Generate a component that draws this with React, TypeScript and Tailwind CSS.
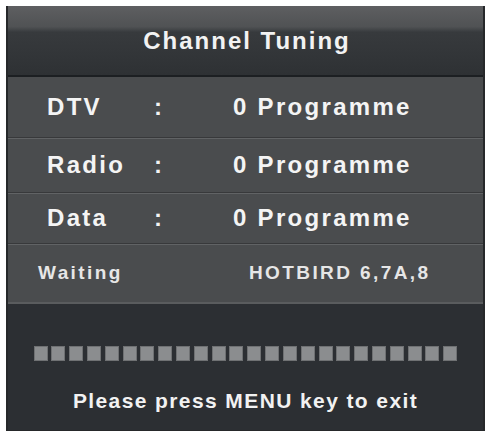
const rows = [
  { label: "DTV", count: 0, height: "h-[60px]" },
  { label: "Radio", count: 0, height: "h-[55px]" },
  { label: "Data", count: 0, height: "h-[51px]" },
];

const BLOCKS = 24;

export default function App() {
  return (
    <div className="w-[490px] h-[432px] bg-white pt-[6px] pl-[6px] font-['Liberation_Sans',Arial,sans-serif]">
      <div className="w-[479px] h-[425px] flex flex-col border-l-2 border-r-2 border-b border-[#26282a] bg-[#2c2f33]">
        {/* Title bar */}
        <div className="h-[71px] flex items-center justify-center border-b-2 border-[#1c1f22] bg-[linear-gradient(180deg,#5e5f61_0%,#505254_30%,#373a3d_38%,#2e3134_100%)]">
          <h1 className="text-[24px] font-bold tracking-[2px] text-[#f2f2f2] pl-[3px] pt-[1px]">Channel Tuning</h1>
        </div>

        {/* Programme counts */}
        <div className="bg-[#4a4c4e]">
          {rows.map((row, i) => (
            <div
              key={row.label}
              className={`${row.height} flex items-center pl-[39px] text-[24px] font-bold tracking-[2.3px] text-[#f4f4f4] ${
                i > 0 ? "border-t border-[#38393b] shadow-[inset_0_1px_0_#616365]" : ""
              }`}
            >
              <span className="w-[107px]">{row.label}</span>
              <span className="w-[79px]">:</span>
              <span>{row.count} Programme</span>
            </div>
          ))}
          <div className="h-[59px] flex items-center pl-[30px] text-[19px] font-bold tracking-[2.4px] text-[#e6e6e6] border-t border-[#38393b] shadow-[inset_0_1px_0_#616365]">
            <span className="w-[211px]">Waiting</span>
            <span>HOTBIRD 6,7A,8</span>
          </div>
        </div>

        {/* Progress + hint */}
        <div className="flex-1 flex flex-col items-center border-t-2 border-[#5a5c5e]">
          <div className="mt-[42px] w-[424px] flex justify-between">
            {Array.from({ length: BLOCKS }).map((_, i) => (
              <div key={i} className="w-[14px] h-[15px] bg-[#8b8d8f] border border-[#6f7173]" />
            ))}
          </div>
          <p className="mt-[24px] text-[21px] font-bold tracking-[1.4px] text-[#f2f2f2]">
            Please press MENU key to exit
          </p>
        </div>
      </div>
    </div>
  );
}
